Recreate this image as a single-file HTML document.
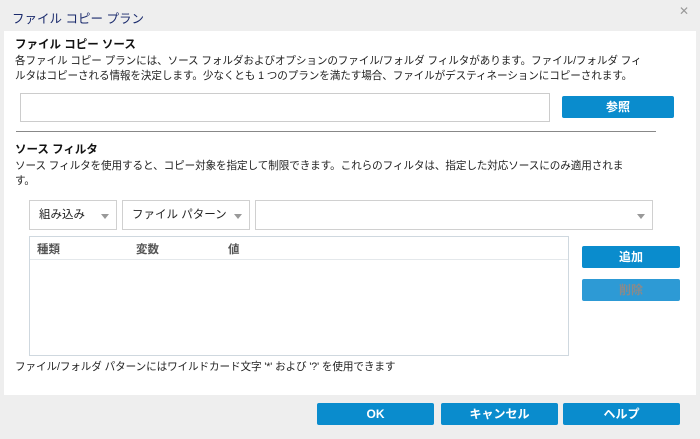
<!DOCTYPE html>
<html><head><meta charset="utf-8"><style>
*{margin:0;padding:0;box-sizing:border-box}
body{width:700px;height:439px;background:#eeeeee;font-family:"Liberation Sans","Noto Sans CJK JP",sans-serif;font-size:12px;color:#222;position:relative;overflow:hidden}
.a{position:absolute;white-space:nowrap}
.panel{position:absolute;left:4px;top:31px;width:692px;height:364px;background:#fff}
.btn{position:absolute;background:#0a8ccd;color:#fff;font-weight:bold;text-align:center;border-radius:2px;font-size:12px}
.dd{position:absolute;border:1px solid #d0d0d0;background:#fff;height:30px;line-height:28px;padding-left:9px;font-size:11.5px}
.tri{position:absolute;right:7px;top:13px;width:0;height:0;border-left:4px solid transparent;border-right:4px solid transparent;border-top:5px solid #999}
.d{font-size:10.6px;line-height:15px;letter-spacing:-0.1px}
</style></head><body>
<div class="a" style="left:12px;top:8px;font-size:12.5px;color:#1a2a6c">ファイル コピー プラン</div>
<div class="a" style="left:679px;top:4px;font-size:12px;color:#999">✕</div>
<div class="panel"></div>
<div class="a" style="left:15px;top:36px;font-weight:bold;font-size:11.5px;color:#111">ファイル コピー ソース</div>
<div class="a d" style="left:15px;top:54px">各ファイル コピー プランには、ソース フォルダおよびオプションのファイル/フォルダ フィルタがあります。ファイル/フォルダ フィ<br>ルタはコピーされる情報を決定します。少なくとも 1 つのプランを満たす場合、ファイルがデスティネーションにコピーされます。</div>
<div class="a" style="left:20px;top:93px;width:530px;height:29px;border:1px solid #ccc"></div>
<div class="btn" style="left:562px;top:96px;width:112px;height:22px;line-height:22px">参照</div>
<div class="a" style="left:16px;top:131px;width:640px;height:1px;background:#888"></div>
<div class="a" style="left:15px;top:141px;font-weight:bold;font-size:11.5px;color:#111">ソース フィルタ</div>
<div class="a d" style="left:15px;top:159px">ソース フィルタを使用すると、コピー対象を指定して制限できます。これらのフィルタは、指定した対応ソースにのみ適用されま<br>す。</div>
<div class="dd" style="left:29px;top:200px;width:88px">組み込み<div class="tri"></div></div>
<div class="dd" style="left:122px;top:200px;width:128px">ファイル パターン<div class="tri"></div></div>
<div class="dd" style="left:255px;top:200px;width:398px"><div class="tri"></div></div>
<div class="a" style="left:29px;top:236px;width:540px;height:120px;border:1px solid #cfd8df"></div>
<div class="a" style="left:30px;top:259px;width:538px;height:1px;background:#e4e8eb"></div>
<div class="a" style="left:37px;top:241px;font-weight:bold;color:#555;font-size:11.5px">種類</div>
<div class="a" style="left:136px;top:241px;font-weight:bold;color:#555;font-size:11.5px">変数</div>
<div class="a" style="left:228px;top:241px;font-weight:bold;color:#555;font-size:11.5px">値</div>
<div class="btn" style="left:582px;top:246px;width:98px;height:22px;line-height:22px">追加</div>
<div class="btn" style="left:582px;top:279px;width:98px;height:22px;line-height:22px;background:#2d9ad5;color:#8a8a8a">削除</div>
<div class="a d" style="left:15px;top:360px">ファイル/フォルダ パターンにはワイルドカード文字 '*' および '?' を使用できます</div>
<div class="btn" style="left:317px;top:403px;width:117px;height:22px;line-height:22px">OK</div>
<div class="btn" style="left:441px;top:403px;width:117px;height:22px;line-height:22px">キャンセル</div>
<div class="btn" style="left:563px;top:403px;width:117px;height:22px;line-height:22px">ヘルプ</div>
</body></html>
